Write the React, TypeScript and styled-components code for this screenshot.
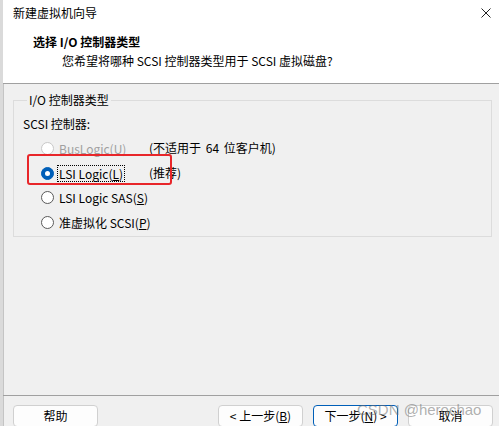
import React from 'react';
import styled, { createGlobalStyle } from 'styled-components';

const GlobalStyle = createGlobalStyle`
  html, body {
    margin: 0;
    padding: 0;
    background: #f0f0f0;
  }
  body {
    font-family: "Noto Sans CJK SC", "Noto Sans", sans-serif;
    font-size: 12px;
    color: #000;
  }
`

const Window = styled.div`
  position: relative;
  display: flex;
  flex-direction: column;
  width: 499px;
  height: 426px;
  box-sizing: border-box;
  border-left: 3px solid #dadada;
  box-shadow: inset 1px 0 0 #c4c4c4;
  background: #f0f0f0;
  overflow: hidden;
`

const Header = styled.div`
  background: #fff;
  height: 83px;
  border-bottom: 1px solid #a0a0a0;
  display: flex;
  flex-direction: column;
`

const TitleBar = styled.div`
  display: flex;
  align-items: center;
  justify-content: space-between;
  height: 26px;
  padding: 0 8px 0 10px;
`

const TitleText = styled.span`
  line-height: 16px;
`

const PageTitle = styled.div`
  font-weight: bold;
  line-height: 16px;
  margin: 8px 0 0 30px;
`

const PageSub = styled.div`
  line-height: 16px;
  margin: 3px 0 0 59px;
`

const Group = styled.fieldset`
  margin: 8px 7px 0 10px;
  padding: 0 0 1px 9px;
  border: 1px solid #dcdcdc;
  border-radius: 0;
`

const Legend = styled.legend`
  padding: 0 2px;
  margin-left: 4px;
  line-height: 16px;
`

const Caption = styled.div`
  line-height: 16px;
  margin: 8px 0 4px 0;
`

const Row = styled.div`
  position: relative;
  display: grid;
  grid-template-columns: 108px auto;
  align-items: center;
  height: 24.7px;
  padding-left: 18px;
  white-space: nowrap;
`

const Choice = styled.label<{ $disabled?: boolean }>`
  display: flex;
  align-items: center;
  gap: 4px;
  color: ${p => (p.$disabled ? '#a0a0a0' : '#000')};
`

const Dot = styled.span<{ $checked?: boolean; $disabled?: boolean }>`
  box-sizing: border-box;
  flex: none;
  width: 13px;
  height: 13px;
  border-radius: 50%;
  background: ${p => (p.$checked ? '#005fb8' : '#fff')};
  border: 1px solid ${p => (p.$checked ? '#005fb8' : p.$disabled ? '#c8c8c8' : '#5a5a5a')};
  display: flex;
  align-items: center;
  justify-content: center;
  &::after {
    content: '';
    display: ${p => (p.$checked ? 'block' : 'none')};
    width: 5px;
    height: 5px;
    border-radius: 50%;
    background: #fff;
  }
`

const ChoiceText = styled.span<{ $focus?: boolean }>`
  line-height: 15px;
  outline: ${p => (p.$focus ? '1px dotted #000' : 'none')};
  outline-offset: 0;
  padding: 0 1px;
`

const Note = styled.span`
  line-height: 16px;
  word-spacing: 2px;
`

const Highlight = styled.span`
  position: absolute;
  left: 4px;
  top: -7px;
  width: 141px;
  height: 27px;
  border: 2px solid #e8262a;
  border-radius: 3px;
  pointer-events: none;
`

const Spacer = styled.div`
  flex: 1;
  border-bottom: 1px solid #a0a0a0;
`

const ButtonBar = styled.div`
  display: flex;
  align-items: center;
  padding: 9px 0 0 10px;
  height: 30px;
  box-sizing: border-box;
  gap: 10px;
`

const Button = styled.button<{ $primary?: boolean }>`
  width: 85px;
  height: 22px;
  box-sizing: border-box;
  padding: 0;
  background: #fdfdfd;
  border: 1px solid ${p => (p.$primary ? '#005fb8' : '#d0d0d0')};
  border-radius: 4px;
  font-family: inherit;
  font-size: 12px;
  color: #000;
  white-space: nowrap;
`

const Push = styled.div`
  width: 100px;
`

const Watermark = styled.div`
  position: absolute;
  left: 354px;
  top: 401px;
  font-family: "Liberation Sans", Arial, sans-serif;
  font-size: 15px;
  color: rgba(110, 110, 110, 0.55);
  pointer-events: none;
  white-space: nowrap;
`

const choices = [
  { label: 'BusLogic', key: 'U', note: '(不适用于 64 位客户机)', disabled: true },
  { label: 'LSI Logic', key: 'L', note: '(推荐)', checked: true },
  { label: 'LSI Logic SAS', key: 'S' },
  { label: '准虚拟化 SCSI', key: 'P' },
];

export default function App() {
  return (
    <>
      <GlobalStyle />
      <Window>
        <Header>
          <TitleBar>
            <TitleText>新建虚拟机向导</TitleText>
            <svg width="10" height="10" viewBox="0 0 10 10">
              <path d="M0.5 0.5 L9.5 9.5 M9.5 0.5 L0.5 9.5" stroke="#222" strokeWidth="1" />
            </svg>
          </TitleBar>
          <PageTitle>选择 I/O 控制器类型</PageTitle>
          <PageSub>您希望将哪种 SCSI 控制器类型用于 SCSI 虚拟磁盘?</PageSub>
        </Header>
        <Group>
          <Legend>I/O 控制器类型</Legend>
          <Caption>SCSI 控制器:</Caption>
          {choices.map(c => (
            <Row key={c.key}>
              <Choice $disabled={c.disabled}>
                <Dot $checked={c.checked} $disabled={c.disabled} />
                <ChoiceText $focus={c.checked}>
                  {c.label}(<u>{c.key}</u>)
                </ChoiceText>
              </Choice>
              {c.note && <Note>{c.note}</Note>}
              {c.checked && <Highlight />}
            </Row>
          ))}
        </Group>
        <Spacer />
        <ButtonBar>
          <Button>帮助</Button>
          <Push />
          <Button>&lt; 上一步(<u>B</u>)</Button>
          <Button $primary>下一步(<u>N</u>) &gt;</Button>
          <Button>取消</Button>
        </ButtonBar>
        <Watermark>CSDN @herochao</Watermark>
      </Window>
    </>
  );
}
